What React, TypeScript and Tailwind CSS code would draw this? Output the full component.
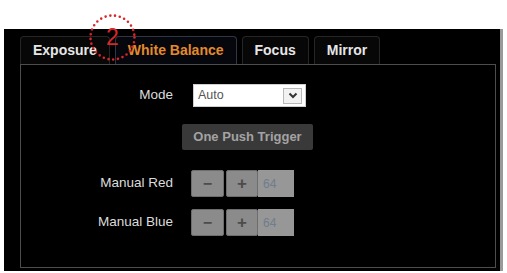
import React from "react";

const tabs = ["Exposure", "White Balance", "Focus", "Mirror"];

function Stepper({ label, value }: { label: string; value: number }) {
  return (
    <div className="flex items-center h-[27px]">
      <div className="w-[152px] text-right text-[13.5px] text-[#dcdcdc]">{label}</div>
      <div className="ml-[18px] flex h-full">
        <button className="w-[33px] h-full bg-[#8b8b8b] border border-[#6d6d6d] rounded-[2px] text-[#4c4c4c] text-[16px] font-bold leading-none">
          −
        </button>
        <button className="ml-[2px] w-[32px] h-full bg-[#8b8b8b] border border-[#6d6d6d] rounded-[2px] text-[#4c4c4c] text-[17px] font-bold leading-none">
          +
        </button>
        <div className="w-[36px] h-full bg-[#979797] text-[#6f7d8c] text-[12px] pl-[5px] flex items-center">
          {value}
        </div>
      </div>
    </div>
  );
}

export default function App() {
  return (
    <div
      className="relative w-[507px] h-[273px] bg-white pt-[29px] overflow-hidden"
      style={{ fontFamily: '"Liberation Sans", Arial, sans-serif' }}
    >
      <div className="ml-[4px] w-[499px] h-[242px] bg-black border-r-[3px] border-[#9a9a9a] pt-[7px] pl-[16px]">
        <div className="flex items-end h-[28px] gap-[5px]">
          {tabs.map((t) => {
            const active = t === "White Balance";
            return (
              <div
                key={t}
                className={
                  "h-[28px] px-[12px] flex items-center rounded-t-[4px] border border-b-0 text-[14px] font-bold " +
                  (active
                    ? "bg-[#05070d] border-[#2f3645] text-[#e38b2c]"
                    : "bg-[#070707] border-[#262626] text-[#e6e6e6]")
                }
              >
                {t}
              </div>
            );
          })}
        </div>
        <div className="w-[476px] h-[204px] border border-[#4d4d4d] pt-[19px]">
          <div className="flex items-center h-[23px]">
            <div className="w-[152px] text-right text-[13.5px] text-[#dcdcdc]">Mode</div>
            <div className="ml-[20px] w-[113px] h-[23px] bg-white border border-[#cfcfcf] flex items-center justify-between pl-[4px] pr-[3px]">
              <span className="text-[12.5px] text-[#555]">Auto</span>
              <span className="w-[19px] h-[16px] border border-[#b8b8b8] bg-[#f2f2f2] flex items-center justify-center">
                <svg width="10" height="7" viewBox="0 0 10 7">
                  <path d="M1.5 1.5 L5 5 L8.5 1.5" fill="none" stroke="#333" strokeWidth="2" />
                </svg>
              </span>
            </div>
          </div>
          <button className="mt-[17px] ml-[161px] w-[131px] h-[26px] bg-[#393939] rounded-[2px] text-[13px] font-bold text-[#a3a3a3]">
            One Push Trigger
          </button>
          <div className="mt-[20px] flex flex-col gap-[12px]">
            <Stepper label="Manual Red" value={64} />
            <Stepper label="Manual Blue" value={64} />
          </div>
        </div>
      </div>
      <div className="absolute left-[88px] top-[13px] w-[49px] h-[49px]">
        <svg width="49" height="49" viewBox="0 0 49 49" className="absolute inset-0">
          <circle
            cx="24.5"
            cy="24.5"
            r="22"
            fill="none"
            stroke="#d8262b"
            strokeWidth="2.6"
            strokeLinecap="round"
            strokeDasharray="0 4.8"
          />
        </svg>
        <div className="absolute inset-0 flex items-center justify-center text-[23px] leading-none text-[#d8262b]">
          2
        </div>
      </div>
    </div>
  );
}
